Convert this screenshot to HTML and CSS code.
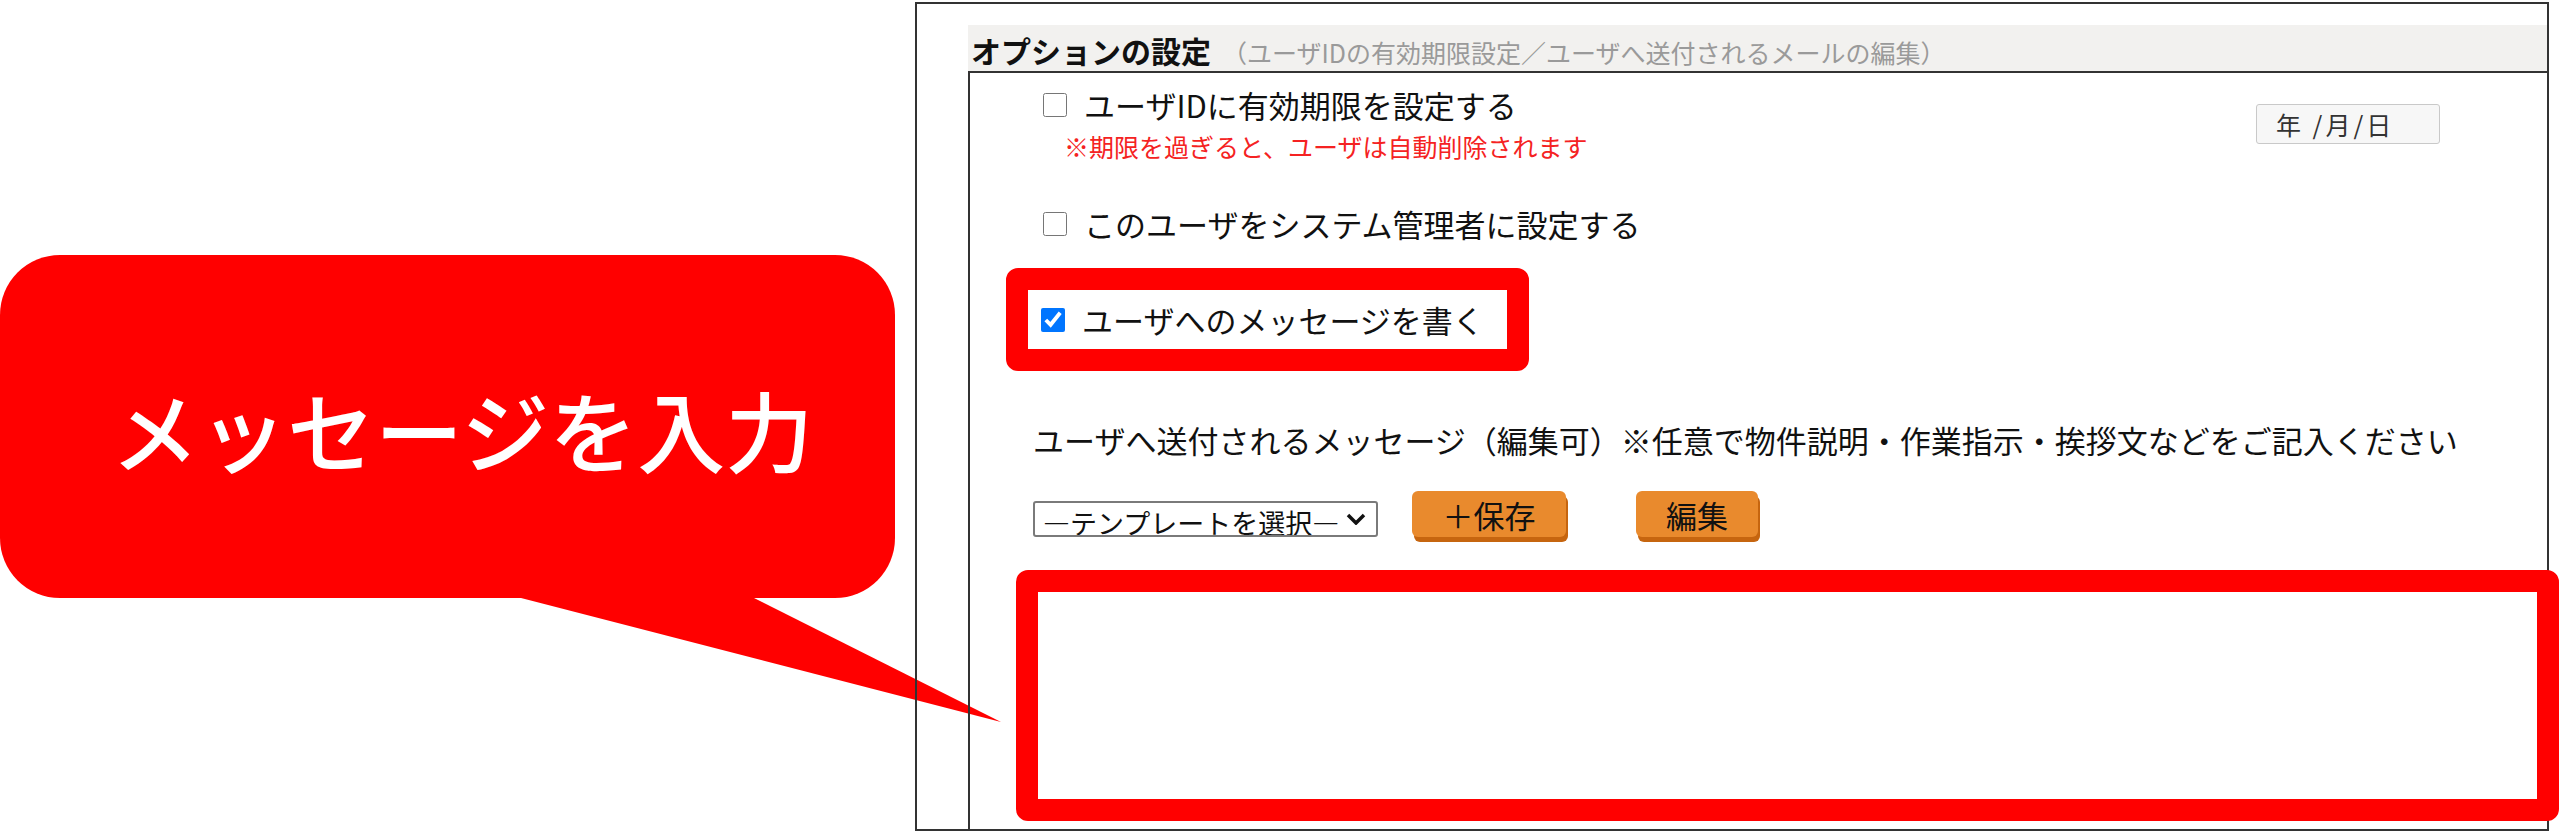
FILE: index.html
```html
<!DOCTYPE html>
<html lang="ja">

<head>
    <meta charset="UTF-8">
    <meta name="viewport" content="width=device-width, initial-scale=1.0">
    <title>オプションの設定</title>
    <link rel="stylesheet" href="styles.css">
</head>

<body>
    <!-- 吹き出し (説明用) -->
    <div class="callout">
        <div class="callout-bubble">メッセージを入力</div>
        <svg class="callout-tail" width="510" height="130" viewBox="0 0 510 130">
            <polygon points="21,0 254,0 501,124" fill="#ff0000" />
        </svg>
    </div>

    <div class="frame">
        <div class="section-title">
            <span class="title-main">オプションの設定</span>
            <span class="title-sub">（ユーザIDの有効期限設定／ユーザへ送付されるメールの編集）</span>
        </div>

        <div class="section-body">
            <div class="expiry-row">
                <div class="expiry-left">
                    <label class="check-row"><input type="checkbox" id="expiryCheck">ユーザIDに有効期限を設定する</label>
                    <p class="note">※期限を過ぎると、ユーザは自動削除されます</p>
                </div>
                <input type="text" class="date-input" value="年 /月/日" readonly>
            </div>

            <label class="check-row admin-row"><input type="checkbox" id="adminCheck">このユーザをシステム管理者に設定する</label>

            <div class="highlight-row">
                <label class="check-row"><input type="checkbox" id="messageCheck" checked>ユーザへのメッセージを書く</label>
            </div>

            <p class="message-label">ユーザへ送付されるメッセージ（編集可）※任意で物件説明・作業指示・挨拶文などをご記入ください</p>

            <div class="controls">
                <div class="select-box">
                    <select id="templateSelect">
                        <option>—テンプレートを選択—</option>
                        <option>物件説明</option>
                        <option>作業指示</option>
                    </select>
                    <svg class="chevron" width="20" height="12" viewBox="0 0 20 12">
                        <polyline points="2,2 10,10 18,2" fill="none" stroke="#111" stroke-width="3.5" />
                    </svg>
                </div>
                <button class="btn btn-save">＋保存</button>
                <button class="btn btn-edit">編集</button>
            </div>

            <div class="message-box">
                <textarea id="messageText"></textarea>
            </div>
        </div>
    </div>
</body>

</html>
```

FILE: styles.css
```css
/* ページ全体 */
body {
    margin: 0;
    background-color: #fff;
    font-family: "Noto Sans CJK JP", "Noto Sans", sans-serif;
    color: #111;
}

input,
select,
button,
textarea {
    font-family: inherit;
}

/* 吹き出し */
.callout {
    position: absolute;
    left: 0;
    top: 255px;
    width: 895px;
    z-index: 0;
}

.callout-bubble {
    height: 343px;
    box-sizing: border-box;
    display: flex;
    align-items: center;
    padding: 2px 0 0 111px;
    background-color: #ff0000;
    border-radius: 60px;
    color: #fff;
    font-size: 88px;
    font-weight: 500;
    line-height: 1;
}

.callout-tail {
    position: absolute;
    left: 500px;
    top: 343px;
}

/* 外枠 */
.frame {
    position: relative;
    z-index: 1;
    width: 1634px;
    height: 829px;
    margin: 2px 0 0 915px;
    padding: 21px 0 0 51px;
    box-sizing: border-box;
    border: 2px solid #333;
    display: flex;
    flex-direction: column;
}

.section-title {
    height: 46px;
    padding: 4px 0 0 3px;
    box-sizing: border-box;
    background-color: #f2f1ef;
    display: flex;
    align-items: baseline;
    gap: 11px;
    line-height: 42px;
}

.title-main {
    font-size: 30px;
    font-weight: bold;
    color: #111;
}

.title-sub {
    font-size: 25px;
    color: #9a9a9a;
}

.section-body {
    flex: 1;
    border-top: 2px solid #333;
    border-left: 2px solid #333;
    padding-top: 14px;
}

/* チェックボックス行 */
.check-row {
    display: flex;
    align-items: center;
    gap: 17px;
    height: 36px;
    font-size: 31px;
    line-height: 36px;
}

.check-row input {
    width: 24px;
    height: 24px;
    margin: 0;
}

.expiry-row {
    display: flex;
    align-items: center;
    justify-content: space-between;
    padding-right: 107px;
}

.expiry-left {
    padding-left: 73px;
}

.note {
    margin: 8px 0 0 21px;
    font-size: 25px;
    line-height: 30px;
    color: #f52222;
}

.date-input {
    width: 184px;
    height: 40px;
    box-sizing: border-box;
    padding-left: 19px;
    border: 1px solid #c9c9c9;
    border-radius: 3px;
    background-color: #f7f7f7;
    font-size: 25px;
    letter-spacing: 3px;
    color: #333;
}

.admin-row {
    margin: 45px 0 0 73px;
}

.highlight-row {
    width: 523px;
    height: 103px;
    box-sizing: border-box;
    margin: 26px 0 0 36px;
    padding-left: 13px;
    border: 22px solid #ff0000;
    border-radius: 12px;
    display: flex;
    align-items: center;
}

.message-label {
    margin: 51px 0 0 63px;
    font-size: 31px;
    line-height: 36px;
}

/* テンプレート選択とボタン */
.controls {
    display: flex;
    align-items: flex-start;
    height: 51px;
    margin: 33px 0 0 63px;
}

.select-box {
    display: flex;
    align-items: center;
    width: 345px;
    height: 36px;
    box-sizing: border-box;
    margin-top: 10px;
    border: 2px solid #7a7a7a;
    border-radius: 3px;
    background-color: #fff;
}

.select-box select {
    flex: 1;
    height: 100%;
    padding: 0 0 0 8px;
    border: none;
    background: transparent;
    appearance: none;
    font-size: 27px;
    color: #111;
    outline: none;
}

.chevron {
    margin-right: 10px;
}

.btn {
    height: 46px;
    padding: 0;
    border: none;
    border-radius: 6px;
    background-color: #e98a2d;
    box-shadow: 2px 5px 0 #c6650f;
    font-size: 31px;
    color: #111;
    cursor: pointer;
}

.btn-save {
    width: 154px;
    margin-left: 34px;
}

.btn-edit {
    width: 122px;
    margin-left: 70px;
}

/* メッセージ入力欄 */
.message-box {
    width: 1543px;
    height: 251px;
    box-sizing: border-box;
    margin: 28px 0 0 46px;
    border: 22px solid #ff0000;
    border-radius: 12px;
    background-color: #fff;
}

.message-box textarea {
    width: 100%;
    height: 100%;
    box-sizing: border-box;
    border: none;
    resize: none;
    outline: none;
}
```
